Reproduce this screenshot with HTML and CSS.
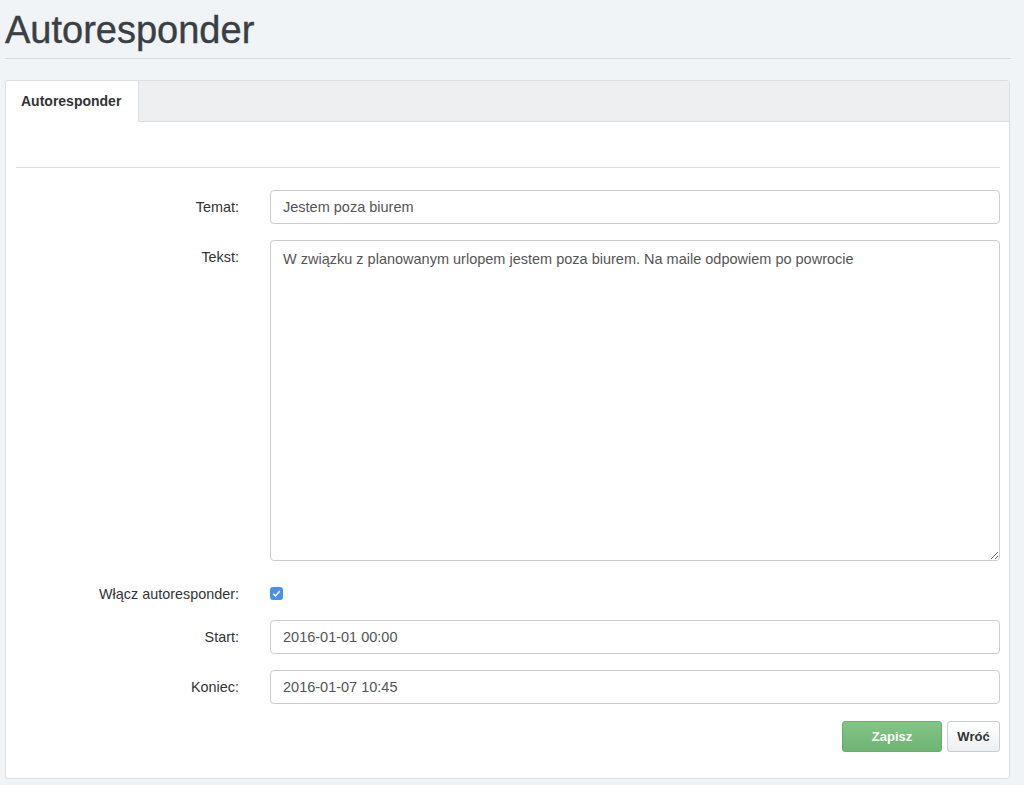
FILE: index.html
```html
<!DOCTYPE html>
<html lang="pl">
<head>
    <meta charset="UTF-8">
    <meta name="viewport" content="width=device-width, initial-scale=1.0">
    <title>Autoresponder</title>
    <link rel="stylesheet" href="styles.css">
</head>
<body>
    <div class="page">
        <h1 class="page-title">Autoresponder</h1>

        <div class="panel">
            <div class="tabs">
                <div class="tab active">Autoresponder</div>
            </div>
            <div class="panel-body">
                <hr class="divider">
                <form class="form">
                    <div class="row">
                        <label class="label" for="subject">Temat:</label>
                        <div class="field">
                            <input class="input" id="subject" type="text" value="Jestem poza biurem">
                        </div>
                    </div>
                    <div class="row">
                        <label class="label" for="body">Tekst:</label>
                        <div class="field">
                            <textarea class="input textarea" id="body">W związku z planowanym urlopem jestem poza biurem. Na maile odpowiem po powrocie</textarea>
                        </div>
                    </div>
                    <div class="row row-check">
                        <label class="label" for="enabled">Włącz autoresponder:</label>
                        <div class="field">
                            <input class="check" id="enabled" type="checkbox" checked>
                        </div>
                    </div>
                    <div class="row">
                        <label class="label" for="start">Start:</label>
                        <div class="field">
                            <input class="input" id="start" type="text" value="2016-01-01 00:00">
                        </div>
                    </div>
                    <div class="row">
                        <label class="label" for="end">Koniec:</label>
                        <div class="field">
                            <input class="input" id="end" type="text" value="2016-01-07 10:45">
                        </div>
                    </div>
                    <div class="actions">
                        <button type="button" class="btn btn-success">Zapisz</button>
                        <button type="button" class="btn btn-default">Wróć</button>
                    </div>
                </form>
            </div>
        </div>
    </div>
</body>
</html>
```

FILE: styles.css
```css
* {
    box-sizing: border-box;
}

body {
    margin: 0;
    background-color: #f1f4f7;
    font-family: 'Liberation Sans', Arial, sans-serif;
    color: #333;
}

.page {
    padding: 0 13px 0 5px;
}

.page-title {
    margin: 0;
    padding: 9px 0 7px;
    font-size: 38px;
    line-height: 42px;
    font-weight: normal;
    color: #3a3f44;
    -webkit-text-stroke: 0.4px #3a3f44;
    border-bottom: 1px solid #d7dadd;
}

.panel {
    margin-top: 21px;
    margin-right: 1px;
    background: #fff;
    border: 1px solid #dcdfe2;
    border-radius: 3px;
}

.tabs {
    display: flex;
    height: 41px;
    background: #eeeff1;
    border-bottom: 1px solid #dcdddf;
    border-radius: 3px 3px 0 0;
}

.tab {
    padding: 0 15px;
    line-height: 40px;
    font-size: 14px;
    font-weight: bold;
    color: #333;
}

.tab.active {
    width: 133px;
    height: 41px;
    background: #fff;
    border-right: 1px solid #dcdddf;
    border-radius: 3px 0 0 0;
}

.panel-body {
    padding: 45px 9px 26px 10px;
}

.divider {
    margin: 0 0 22px;
    border: 0;
    border-top: 1px solid #dcdddf;
}

.row {
    display: flex;
    align-items: flex-start;
    margin-bottom: 16px;
}

.label {
    width: 223px;
    padding-top: 7px;
    text-align: right;
    font-size: 14.4px;
    line-height: 20px;
    color: #333;
}

.field {
    flex: 1;
    margin-left: 31px;
}

.input {
    display: block;
    width: 100%;
    height: 34px;
    padding: 6px 12px;
    font-family: 'Liberation Sans', Arial, sans-serif;
    font-size: 14.5px;
    line-height: 20px;
    color: #555;
    background: #fff;
    border: 1px solid #ccc;
    border-radius: 4px;
}

.textarea {
    height: 321px;
    padding-top: 8px;
    resize: vertical;
}

.row-check {
    margin-bottom: 16px;
}

.check {
    appearance: none;
    display: block;
    width: 13px;
    height: 13px;
    margin: 10px 0 0;
    border-radius: 3px;
    background: #4a8ff0 url("data:image/svg+xml,%3Csvg xmlns='http://www.w3.org/2000/svg' viewBox='0 0 13 13'%3E%3Cpath d='M3.3 6.8 5.5 9 9.8 3.9' fill='none' stroke='%23fff' stroke-width='1.5'/%3E%3C/svg%3E") center / 13px 13px no-repeat;
}

.actions {
    display: flex;
    justify-content: flex-end;
    gap: 5px;
    margin-top: 17px;
}

.btn {
    height: 31px;
    padding: 0 8px;
    font-family: 'Liberation Sans', Arial, sans-serif;
    font-size: 13px;
    font-weight: bold;
    border-radius: 3px;
    cursor: pointer;
}

.btn-success {
    width: 100px;
    color: #fff;
    background: linear-gradient(to bottom, #84c586, #6db472);
    border: 1px solid #68ad6b;
}

.btn-default {
    width: 53px;
    color: #333;
    background: linear-gradient(to bottom, #fff, #eceff1);
    border: 1px solid #c9ccd0;
}
```
